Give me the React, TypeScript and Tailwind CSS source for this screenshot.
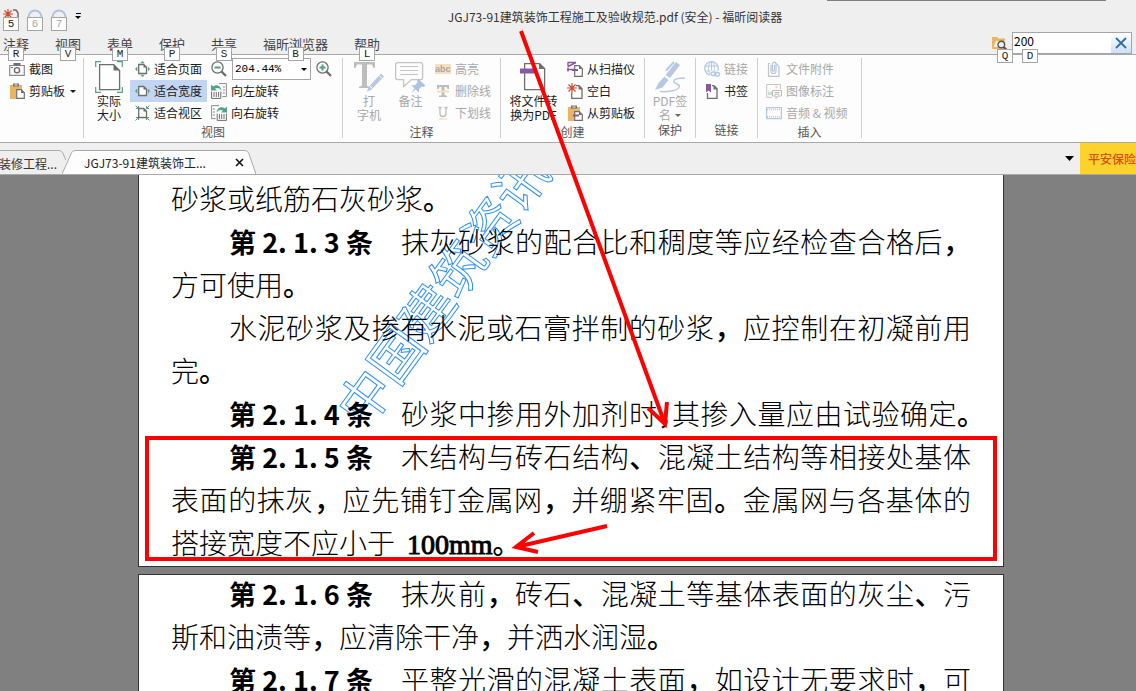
import type { ReactNode } from "react";
import clsx from "clsx";

const GREEN = "#4fa583";
const LINE = "#6e6e6e";
const PALE = "#b5c9e2";
const PURPLE = "#8757a6";
const ORANGE = "#e9b560";

function Svg({ w = 16, h = 16, children }: { w?: number; h?: number; children: ReactNode }) {
  return (
    <svg width={w} height={h} viewBox={`0 0 ${w} ${h}`} fill="none" className="shrink-0" aria-hidden="true">
      {children}
    </svg>
  );
}

/* ---------- icons ---------- */

const Camera = () => (
  <Svg>
    <path d="M0.700 4.500h14.600v9.800H0.700z" stroke="#8a8a8a" strokeWidth="1.200" />
    <path d="M4.500 2h7v2.500h-7z" fill={LINE} />
    <circle cx="8" cy="9.200" r="2.600" stroke={LINE} strokeWidth="1.400" />
    <path d="M2 6.500h2" stroke={LINE} />
  </Svg>
);

const Clipboard = ({ accent = false }: { accent?: boolean }) => (
  <Svg>
    <path d="M1 2h12v5H7v9H1z" fill={ORANGE} />
    <path d="M4 0.500h6v3H4z" fill={LINE} />
    <path d="M5.500 2h3" stroke="#fff" />
    <path d="M7.700 6.700h4.600l3 3v5.600H7.700z" fill="#fff" stroke={LINE} strokeWidth="1.200" />
    <path d="M12 6.500V10h3.500z" fill={LINE} />
    {accent && <path d="M6 10.500h6" stroke={PURPLE} strokeWidth="2" />}
  </Svg>
);

const ActualSize = () => (
  <Svg w={28} h={32}>
    <path d="M0.700 6V0.700H6M22 0.700h5.300V6M0.700 26v5.300H6M22 31.300h5.300V26" stroke={GREEN} strokeWidth="1.200" />
    <path d="M4.600 3.600h14l6 6v19h-20z" fill="#fff" stroke={LINE} strokeWidth="1.300" />
    <path d="M18.500 3v6.500H25z" fill={LINE} />
  </Svg>
);

const PageShape = () => (
  <>
    <path d="M3.700 3.500h5L11.500 6.300v6.200H3.700z" fill="#fff" stroke={LINE} strokeWidth="1.300" />
    <path d="M8.500 3v3.500H12z" fill={LINE} />
  </>
);

const FitPage = () => (
  <Svg w={15}>
    <path d="M5.200 2.200 7.500 0l2.300 2.200zM5.200 13.800l2.300 2.200 2.300-2.200zM2.300 5.500 0 8l2.300 2.500zM12.900 5.500 15 8l-2.100 2.500z" fill={GREEN} />
    <PageShape />
  </Svg>
);

const FitWidth = () => (
  <Svg w={15}>
    <path d="M2.300 5.500 0 8l2.300 2.500zM12.900 5.500 15 8l-2.100 2.500z" fill={GREEN} />
    <PageShape />
  </Svg>
);

const FitVisible = () => (
  <Svg w={15}>
    <path d="M0.500 0.500l3 3M14.500 0.500l-3 3M0.500 15.500l3-3M14.500 15.500l-3-3M1 3.500h2.500V1M14 3.500h-2.500V1M1 12.500h2.500V15M14 12.500h-2.500V15" stroke={GREEN} />
    <PageShape />
  </Svg>
);

const Zoom = ({ plus = false }: { plus?: boolean }) => (
  <Svg>
    <circle cx="6.500" cy="6.500" r="5.600" stroke={LINE} strokeWidth="1.300" />
    <path d="M10.600 10.600l4.400 4.400" stroke={LINE} strokeWidth="2.200" />
    <path d={plus ? "M3.500 6.500h6M6.500 3.500v6" : "M3.500 6.500h6"} stroke={GREEN} strokeWidth="2" />
  </Svg>
);

const RotateLeft = () => (
  <Svg>
    <path d="M8 .6h7.400v13h-4M12 4h2M12 7h2M12 10h2" stroke="#8a8a8a" />
    <path d="M.6 8.600v6.800h9.200V8.600M3 9v5M5.300 9v5M7.600 9v5" stroke={LINE} />
    <path d="M0 1.500v6h6L4 5.600c2-1.200 4.500-.8 6.500 1.900C10 3 5.500.500 2 3.500z" fill={GREEN} />
  </Svg>
);

const RotateRight = () => (
  <Svg>
    <path d="M8 .6H.6v13h4M2 4h2M2 7h2M2 10h2" stroke="#8a8a8a" />
    <path d="M6.200 8.600v6.800h9.200V8.600M8.400 9v5M10.700 9v5M13 9v5" stroke={LINE} />
    <path d="M16 1.500v6h-6l2-1.900c-2-1.200-4.500-.8-6.500 1.900C6 3 10.500.500 14 3.500z" fill={GREEN} />
  </Svg>
);

const Typewriter = () => (
  <Svg w={30} h={32}>
    <path d="M0 1h21v6h-1.500l-1.500-3.500h-5V24c0 1 1 1.500 3 1.500V27H5v-1.500c2 0 3-.5 3-1.500V3.500H3L1.500 7H0z" fill="#bdbdbd" />
    <path d="M27 12.500l3 3L17 29l-4 1.500L14.500 26z" fill={PALE} />
    <path d="M25 14.500l3 3M16 25l2.500 2.500" stroke="#fff" />
  </Svg>
);

const Note = () => (
  <Svg w={31} h={32}>
    <path d="M2.600 1.600h23a2 2 0 0 1 2 2v13a2 2 0 0 1-2 2h-9l-8 7v-7h-6a2 2 0 0 1-2-2v-13a2 2 0 0 1 2-2z" stroke="#c4c4c4" strokeWidth="1.300" />
    <path d="M5 5.500h18M5 9.500h18M5 13.500h18" stroke="#c4c4c4" />
    <path d="M23 17.500l7.500 7-2 1.500-1.500-.5-3 2.500v3.500l-3.500-3-4.500 4 3.500-5-3-3.500 3.500.3 2.500-3-.5-2z" fill="#a9c3e2" />
  </Svg>
);

const Highlight = () => (
  <Svg>
    <path d="M0 3h16v10H0z" fill="#f5dfbd" />
    <text x="0" y="11" fontSize="9" fontWeight="700" fontFamily="Liberation Sans" fill="#a9a9a9">abc</text>
  </Svg>
);

const Strike = () => (
  <Svg>
    <path d="M2 2h12v4h-1.500L11.500 4H9.500v8.500H12V14H4v-1.500h2.500V4h-2l-1 2H2z" fill="#bdbdbd" />
    <path d="M2 8.500h12" stroke="#f5dfbd" strokeWidth="2" />
  </Svg>
);

const Underline = () => (
  <Svg>
    <path d="M5 2.500v6a3 3 0 0 0 6 0v-6M3.500 2.500h3M9.500 2.500h3" stroke="#bdbdbd" strokeWidth="1.300" />
    <path d="M4 14h8" stroke="#f5dfbd" strokeWidth="1.400" />
  </Svg>
);

const ToPdf = () => (
  <Svg w={26} h={32}>
    <path d="M4.600 2.600h15l5 5v21h-20z" fill="#fff" stroke={LINE} strokeWidth="1.300" />
    <path d="M19 2v6h6z" fill={LINE} />
    <path d="M0 7.500h16v5H0z" fill={PURPLE} />
  </Svg>
);

const SmallPage = () => (
  <>
    <path d="M7.700 4.700h4.600l3 3v7.600H7.700z" fill="#fff" stroke={LINE} strokeWidth="1.200" />
    <path d="M12 4.500V8h3.500z" fill={LINE} />
  </>
);

const Scanner = () => (
  <Svg>
    <path d="M1 1.500h8M9 1.500L1 5.500M1 1v4.500M0 8.500h7M1 6.500v4" stroke={PURPLE} strokeWidth="1.400" />
    <SmallPage />
    <path d="M5 9h6" stroke={PURPLE} strokeWidth="2" />
  </Svg>
);

const Burst = () => <path d="M5 0v10M0 5h10M1.500 1.500l7 7M8.500 1.500l-7 7" stroke="#cf4a2e" strokeWidth="1.200" />;

const Blank = () => (
  <Svg>
    <path d="M9 2.700h3l3 3v9.600H4.700V10" stroke={LINE} strokeWidth="1.300" />
    <path d="M11.500 2v4.500H16z" fill={LINE} />
    <Burst />
  </Svg>
);

const Sign = () => (
  <Svg w={30} h={32}>
    <path d="M21 1l4 3-10 13-4.500-3z" fill={PALE} />
    <path d="M9.500 15.500l4 3.500-6 7.500L0 29l3.500-7z" fill={PALE} />
    <path d="M19 1L11 9.500" stroke={PALE} strokeWidth="2" />
    <path d="M30 17c-7 0-12 1-11 4 1 2.500 7 2 5 5.500C22 30 12 31 5 30.500" stroke={PALE} strokeWidth="1.500" />
  </Svg>
);

const Globe = () => (
  <Svg>
    <circle cx="7.500" cy="7.500" r="6.800" stroke={PALE} strokeWidth="1.300" />
    <ellipse cx="7.500" cy="7.500" rx="3" ry="6.800" stroke={PALE} />
    <path d="M1 5h13M1 10h13M7.500 1v13" stroke={PALE} />
    <path d="M6 9.500h10V16H6z" fill="#fdfdfd" />
    <rect x="7" y="11" width="5" height="3.500" rx="1.700" stroke={PALE} strokeWidth="1.300" />
    <rect x="10.500" y="11.500" width="5" height="3.500" rx="1.700" stroke={PALE} strokeWidth="1.300" />
  </Svg>
);

const Bookmark = () => (
  <Svg>
    <path d="M8 2.700h2l3 3v9.600H3.500V10" stroke={LINE} strokeWidth="1.300" />
    <path d="M9.500 2v4.500H14z" fill={LINE} />
    <path d="M2 1h5v8.500L4.500 7.500 2 9.500z" fill={PURPLE} />
  </Svg>
);

const Attach = () => (
  <Svg>
    <path d="M4 2.500H2.500v12.800h10.500V5.500l-3-3" stroke="#c4c4c4" strokeWidth="1.200" />
    <path d="M5 4v6a2.500 2.500 0 0 0 5 0V3a1.800 1.800 0 0 0-3.600 0v6.500c0 1 2 1 2 0V4" stroke={PALE} strokeWidth="1.200" />
  </Svg>
);

const ImageNote = () => (
  <Svg>
    <path d="M14.500 6V1.500H0.700v12.800H6" stroke="#c4c4c4" />
    <path d="M2 12V8l2 1.500L6 8v4z" fill="#c3dfd4" />
    <circle cx="10.500" cy="4" r="1.200" fill="#f3d3c4" />
    <path d="M6.500 7.500h9v5.500H12l-2 2.500V13H6.500zM8.500 9.500h5M8.500 11.200h5" stroke="#bcbcbc" />
  </Svg>
);

const Film = () => (
  <Svg>
    <path d="M0.600 2.600h14.800v11H0.600z" stroke={PALE} strokeWidth="1.200" />
    <path d="M1 4.500h14M1 11.700h14" stroke={PALE} strokeWidth="1.600" strokeDasharray="1 1" />
  </Svg>
);

const FolderSearch = () => (
  <Svg w={17} h={15}>
    <path d="M1 1h5l1.500 1.500H14V13H1z" fill={ORANGE} />
    <path d="M2.500 11L5 5h9v6z" fill="#fff" opacity=".8" />
    <circle cx="10.300" cy="8.500" r="3.300" fill="#eee" stroke="#555" strokeWidth="1.400" />
    <path d="M12.700 11l2.800 2.800" stroke="#555" strokeWidth="2" />
  </Svg>
);

const Caret = () => (
  <Svg w={6} h={3}>
    <path d="M0 0h6L3 3z" fill="currentColor" />
  </Svg>
);

/* ---------- ribbon parts ---------- */

function KeyTip({ children, dim = false }: { children: ReactNode; dim?: boolean }) {
  return (
    <span
      className={clsx(
        "flex h-[14px] w-4 items-center justify-center border border-[#a5a5a5] bg-white font-['Liberation_Mono',monospace] text-[11px] leading-none",
        dim ? "text-[#a8a8a8]" : "text-[#222]",
      )}
    >
      {children}
    </span>
  );
}

type ToolProps = { icon: ReactNode; label: string; disabled?: boolean; active?: boolean; menu?: boolean };

function Tool({ icon, label, disabled, active, menu }: ToolProps) {
  return (
    <button
      type="button"
      disabled={disabled}
      className={clsx(
        "flex h-[22px] items-center gap-1 whitespace-nowrap px-[5px]",
        active && "bg-[#c2d5f2]",
        disabled ? "text-[#a8a8a8]" : "text-[#1a1a1a]",
      )}
    >
      {icon}
      {label}
      {menu && <span className="pl-px"><Caret /></span>}
    </button>
  );
}

function BigTool({ icon, lines, disabled, menu }: { icon: ReactNode; lines: string[]; disabled?: boolean; menu?: boolean }) {
  return (
    <button
      type="button"
      disabled={disabled}
      className={clsx(
        "flex flex-col items-center pt-[3px] leading-[14px]",
        disabled ? "text-[#a8a8a8]" : "text-[#1a1a1a]",
      )}
    >
      <span className="pb-px">{icon}</span>
      {lines.map((line, i) => (
        <span key={line} className="flex items-center gap-1 whitespace-nowrap">
          {line}
          {menu && i === lines.length - 1 && <span className="text-[#666]"><Caret /></span>}
        </span>
      ))}
    </button>
  );
}

function Group({ label, className, children }: { label: string; className: string; children: ReactNode }) {
  return (
    <section className={clsx("flex h-20 shrink-0 flex-col border-r border-[#cfcfcf]", className)}>
      <div className="flex h-[66px]">{children}</div>
      <p className="text-center leading-4 text-[#555]">{label}</p>
    </section>
  );
}

const menus = [
  ["注释", "R"],
  ["视图", "V"],
  ["表单", "M"],
  ["保护", "P"],
  ["共享", "S"],
  ["福昕浏览器", "B"],
  ["帮助", "L"],
];

function Header() {
  return (
    <header>
      <div className="flex h-[31px]">
        <div className="flex w-[94px] shrink-0 items-end gap-2 pl-[3px]">
          <button type="button" className="flex flex-col items-center" aria-label="新建">
            <Svg h={8}>
              <path d="M10 1h3l2 3v4" stroke={LINE} strokeWidth="1.500" />
              <Burst />
            </Svg>
            <KeyTip>5</KeyTip>
          </button>
          {["6", "7"].map((n) => (
            <button key={n} type="button" disabled className="flex flex-col items-center">
              <Svg h={8}>
                <path d="M1.500 8a6.500 6.500 0 0 1 13 0" stroke="#aec3dd" strokeWidth="2" />
              </Svg>
              <KeyTip dim>{n}</KeyTip>
            </button>
          ))}
          <button type="button" aria-label="自定义" className="flex flex-col items-center gap-[2px] pb-3 text-black">
            <span className="h-px w-[5px] bg-black" />
            <Caret />
          </button>
        </div>
        <h1 className="flex-1 pt-1 text-center leading-[26px] text-[#333]">
          JGJ73-91建筑装饰工程施工及验收规范.pdf (安全) - 福昕阅读器
        </h1>
      </div>

      <div className="flex h-[23px] justify-between">
        <nav className="flex gap-[26px] pl-[3px] text-[13px] leading-[26px] text-[#444]">
          {menus.map(([name, key]) => (
            <a key={key} href="#" className="relative whitespace-nowrap">
              {name}
              <span className="absolute left-1/2 top-4 z-10 -translate-x-1/2">
                <KeyTip>{key}</KeyTip>
              </span>
            </a>
          ))}
        </nav>
        <form className="relative flex pr-1">
          <span className="pr-1 pt-[5px]"><FolderSearch /></span>
          <div className="mt-px flex h-[22px] w-[120px] border border-[#a5a5a5] bg-white">
            <input
              aria-label="查找"
              defaultValue="200"
              className="h-4 w-0 flex-1 pl-px text-black outline-none"
            />
            <button type="button" aria-label="清除" className="flex w-5 items-center justify-center bg-linear-to-b from-white to-[#cfe0f7]">
              <Svg w={12} h={12}>
                <path d="M1 1l10 10M11 1L1 11" stroke="#2f6fa8" strokeWidth="1.800" />
              </Svg>
            </button>
          </div>
          <span className="absolute left-[6px] top-[18px] z-10"><KeyTip>Q</KeyTip></span>
          <span className="absolute left-[31px] top-[18px] z-10"><KeyTip>D</KeyTip></span>
        </form>
      </div>
    </header>
  );
}

function Ribbon() {
  return (
    <div className="flex overflow-hidden border-y border-[#a9a9a9] bg-[#fdfdfd] pb-1 pt-[3px]">
      <section className="h-20 w-[84px] shrink-0 border-r border-[#cfcfcf] pl-1">
        <Tool icon={<Camera />} label="截图" />
        <Tool icon={<Clipboard />} label="剪贴板" menu />
      </section>

      <Group label="视图" className="w-[259px]">
        <div className="flex w-[46px] shrink-0 justify-center pl-1">
          <BigTool icon={<ActualSize />} lines={["实际", "大小"]} />
        </div>
        <div>
          <Tool icon={<FitPage />} label="适合页面" />
          <Tool icon={<FitWidth />} label="适合宽度" active />
          <Tool icon={<FitVisible />} label="适合视区" />
        </div>
        <div>
          <div className="flex h-[22px] items-center gap-[5px] pl-1">
            <button type="button" aria-label="缩小"><Zoom /></button>
            <div className="relative">
              <select aria-label="缩放比例" className="block h-[22px] w-[79px] appearance-none border border-[#a5a5a5] bg-white pl-[2px] font-['Liberation_Mono',monospace] text-[11px] text-black">
                <option>204.44%</option>
              </select>
              <span className="pointer-events-none absolute right-1 top-[10px] text-black"><Caret /></span>
            </div>
            <button type="button" aria-label="放大"><Zoom plus /></button>
          </div>
          <div className="-ml-px">
            <Tool icon={<RotateLeft />} label="向左旋转" />
            <Tool icon={<RotateRight />} label="向右旋转" />
          </div>
        </div>
      </Group>

      <Group label="注释" className="w-[158px]">
        <div className="flex w-[87px] shrink-0 gap-[11px] pl-[11px]">
          <BigTool icon={<Typewriter />} lines={["打", "字机"]} disabled />
          <div><BigTool icon={<Note />} lines={["备注"]} disabled /></div>
        </div>
        <div>
          <Tool icon={<Highlight />} label="高亮" disabled />
          <Tool icon={<Strike />} label="删除线" disabled />
          <Tool icon={<Underline />} label="下划线" disabled />
        </div>
      </Group>

      <Group label="创建" className="w-[144px]">
        <div className="flex w-[61px] shrink-0 justify-center pl-1">
          <BigTool icon={<ToPdf />} lines={["将文件转", "换为PDF"]} />
        </div>
        <div>
          <Tool icon={<Scanner />} label="从扫描仪" />
          <Tool icon={<Blank />} label="空白" />
          <Tool icon={<Clipboard accent />} label="从剪贴板" />
        </div>
      </Group>

      <Group label="保护" className="w-[51px]">
        <div className="flex flex-1 justify-center">
          <BigTool icon={<Sign />} lines={["PDF签", "名"]} disabled menu />
        </div>
      </Group>

      <Group label="链接" className="w-[62px]">
        <div className="pl-[3px]">
          <Tool icon={<Globe />} label="链接" disabled />
          <Tool icon={<Bookmark />} label="书签" />
        </div>
      </Group>

      <Group label="插入" className="w-[104px]">
        <div className="pl-[3px]">
          <Tool icon={<Attach />} label="文件附件" disabled />
          <Tool icon={<ImageNote />} label="图像标注" disabled />
          <Tool icon={<Film />} label="音频 & 视频" disabled />
        </div>
      </Group>
    </div>
  );
}

function TabStrip() {
  return (
    <div className="flex h-8 items-stretch justify-between border-b border-[#a9a9a9]">
      <div className="flex items-end overflow-hidden">
        <div className="flex">
          <div className="flex h-6 w-[57px] justify-end border-t border-[#a9a9a9] leading-[25px] text-[#333]">
            <a href="#" className="whitespace-nowrap">装修工程...</a>
          </div>
          <Svg w={9} h={24}>
            <path d="M0 .5h2c2 0 3 1 4 3L9 10" stroke="#a9a9a9" />
          </Svg>
        </div>
        <div className="-ml-1 flex">
          <Svg w={14} h={24}>
            <path d="M0 24L9 4c1-2.500 2-3.500 5-3.500V24z" fill="#fdfdfd" />
            <path d="M0 24L9 4c1-2.500 2-3.500 5-3.500" stroke="#a9a9a9" />
          </Svg>
          <div className="flex h-6 items-center border-t border-[#a9a9a9] bg-[#fdfdfd] pl-2 text-[#222]">
            <a href="#" className="w-[151px] whitespace-nowrap">JGJ73-91建筑装饰工...</a>
            <button type="button" aria-label="关闭标签">
              <Svg w={9} h={9}>
                <path d="M1 1l7 7M8 1L1 8" stroke="#111" strokeWidth="1.600" />
              </Svg>
            </button>
          </div>
          <Svg w={12} h={24}>
            <path d="M0 .5c3 0 4 1 5 3.500l7 20H0z" fill="#fdfdfd" />
            <path d="M0 .5c3 0 4 1 5 3.500l7 20" stroke="#a9a9a9" />
          </Svg>
        </div>
      </div>
      <div className="flex items-center">
        <button type="button" aria-label="标签列表" className="px-[6px]">
          <Svg w={9} h={5}>
            <path d="M0 0h9L4.500 5z" fill="#000" />
          </Svg>
        </button>
        <a href="#" className="flex h-full w-14 items-center overflow-hidden whitespace-nowrap bg-[#fdd32b] pl-2 font-medium text-[#dd4b12]">
          平安保险
        </a>
      </div>
    </div>
  );
}

/* ---------- document ---------- */

type Line = { clause?: string; indent?: boolean; text: string; tail?: string; full?: boolean; tight?: boolean };

const pageOne: Line[] = [
  { text: "砂浆或纸筋石灰砂浆。" },
  { clause: "2. 1. 3", text: "抹灰砂浆的配合比和稠度等应经检查合格后，", full: true },
  { text: "方可使用。" },
  { indent: true, text: "水泥砂浆及掺有水泥或石膏拌制的砂浆，应控制在初凝前用", full: true },
  { text: "完。" },
  { clause: "2. 1. 4", text: "砂浆中掺用外加剂时，其掺入量应由试验确定。", full: true, tight: true },
  { clause: "2. 1. 5", text: "木结构与砖石结构、混凝土结构等相接处基体", full: true },
  { text: "表面的抹灰，应先铺钉金属网，并绷紧牢固。金属网与各基体的", full: true },
  { text: "搭接宽度不应小于", tail: "100mm" },
];

const pageTwo: Line[] = [
  { clause: "2. 1. 6", text: "抹灰前，砖石、混凝土等基体表面的灰尘、污", full: true },
  { text: "斯和油渍等，应清除干净，并洒水润湿。" },
  { clause: "2. 1. 7", text: "平整光滑的混凝土表面，如设计无要求时，可", full: true },
];

// punctuation is set heavier than the running text
function Body({ text }: { text: string }) {
  return text.split(/([，。、])/).map((part, i) =>
    /^[，。、]$/.test(part) ? <b key={i} className="font-medium">{part}</b> : part,
  );
}

function Lines({ lines }: { lines: Line[] }) {
  return lines.map((line) => (
    <p key={line.text} className={clsx("flex whitespace-nowrap", line.indent && "pl-[58px]")}>
      {line.clause && <b className="w-[230px] shrink-0 pl-[58px] text-[27px] font-bold">第 {line.clause} 条</b>}
      <span
        className={clsx(
          line.full && "flex-1 whitespace-normal [text-align-last:justify]",
          line.tight && "[font-feature-settings:'halt']",
        )}
      >
        <Body text={line.text} />
        {line.tail && (
          <>
            <span className="pl-3 font-['Liberation_Serif',serif] font-normal [-webkit-text-stroke:1px_black]">{line.tail}</span>
            <b className="font-medium">。</b>
          </>
        )}
      </span>
    </p>
  ));
}

function Page({ children }: { children: ReactNode }) {
  return (
    <article className="relative w-[866px] max-w-full shrink-0 overflow-hidden border-x border-[#333] bg-white px-8 text-[28px] font-light leading-[43px] text-black">
      {children}
    </article>
  );
}

function Watermark() {
  return (
    <svg className="absolute left-0 top-0 h-full w-full" aria-hidden="true">
      <text
        transform="translate(226 222) rotate(-54)"
        x="-27"
        y="20"
        fontSize="53"
        fontWeight="400"
        fill="none"
        stroke="#2a8fff"
        strokeWidth="1"
      >
        中国建筑资讯网
      </text>
    </svg>
  );
}

function Annotations() {
  return (
    <>
      <div className="pointer-events-none absolute left-[145px] top-[436px] h-[125px] w-[852px] border-4 border-[#fe0000]" />
      <svg className="pointer-events-none absolute left-0 top-0 h-full w-full" fill="none" stroke="#fe0000" strokeWidth="4" aria-hidden="true">
        <path d="M521 31L665 424M648 408l17 16 2-22" />
        <path d="M607 526L516 547M534 533l-18 14 22 5" />
      </svg>
    </>
  );
}

export default function App() {
  return (
    <div className="relative flex h-screen flex-col overflow-hidden bg-[#efefef] font-['Noto_Sans_CJK_SC',sans-serif] text-[12px] leading-4">
      <div className="absolute right-[30px] top-0 h-px w-[279px] bg-[#808080]" />
      <Header />
      <Ribbon />
      <TabStrip />
      <main className="flex min-h-0 flex-1 flex-col items-center gap-[7px] overflow-hidden bg-[#808080] pl-[6px]">
        <Page>
          <Watermark />
          <div className="relative pt-[2px]">
            <Lines lines={pageOne} />
          </div>
          <div className="-mx-8 h-px bg-[#333]" />
        </Page>
        <Page>
          <div className="-mx-8 h-px bg-[#333]" />
          <div className="-mt-[3px]">
            <Lines lines={pageTwo} />
          </div>
        </Page>
      </main>
      <Annotations />
    </div>
  );
}
